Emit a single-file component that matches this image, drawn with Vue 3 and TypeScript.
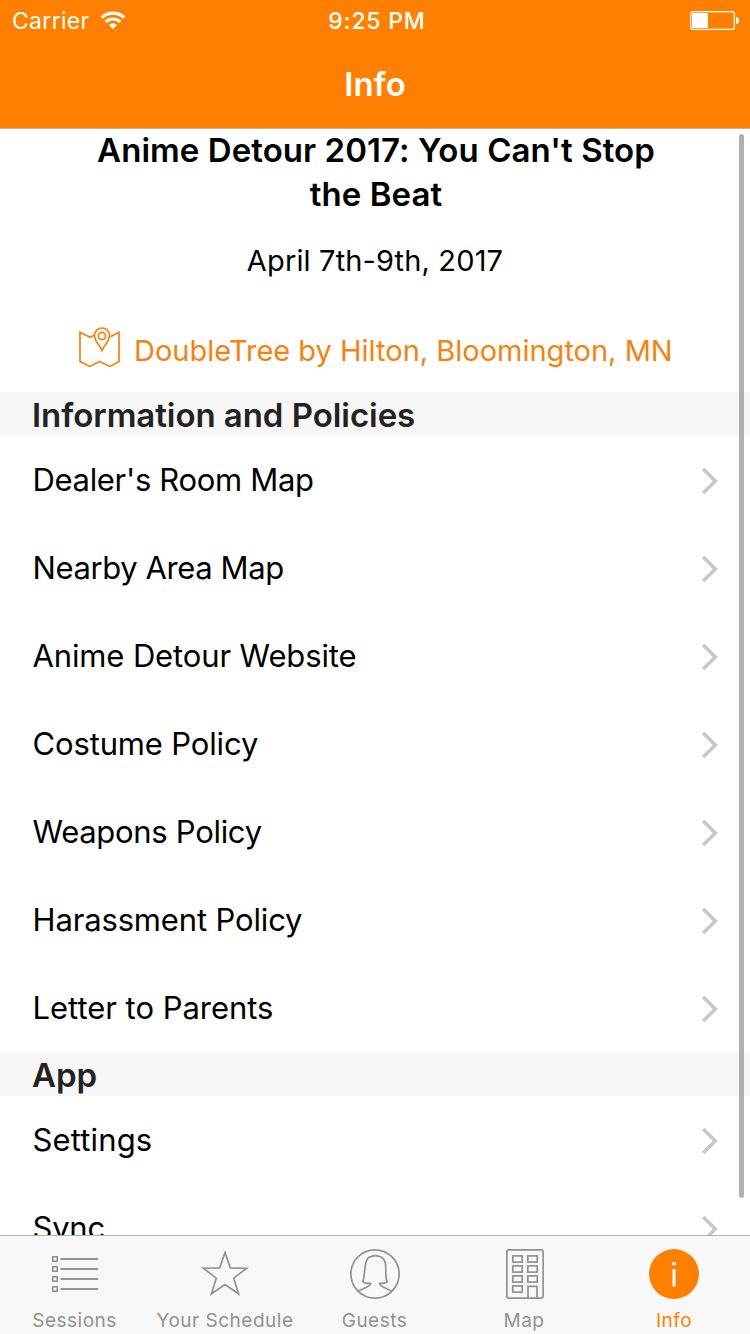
<script setup lang="ts">
interface Row {
  label: string
  spacing: string
}
interface Section {
  title: string
  rows: Row[]
}

const sections: Section[] = [
  {
    title: 'Information and Policies',
    rows: [
      { label: "Dealer's Room Map", spacing: '-0.33px' },
      { label: 'Nearby Area Map', spacing: '-0.4px' },
      { label: 'Anime Detour Website', spacing: '-0.13px' },
      { label: 'Costume Policy', spacing: '-0.15px' },
      { label: 'Weapons Policy', spacing: '-0.3px' },
      { label: 'Harassment Policy', spacing: '-0.15px' },
      { label: 'Letter to Parents', spacing: '-0.03px' },
    ],
  },
  {
    title: 'App',
    rows: [
      { label: 'Settings', spacing: '0.15px' },
      { label: 'Sync', spacing: '-0.25px' },
    ],
  },
]
const windows = [
  [512.5, 1255.5], [527.5, 1255.5],
  [512.5, 1265.5], [527.5, 1265.5],
  [512.5, 1275.5], [527.5, 1275.5],
  [512.5, 1285.5],
].map(([x, y]) => ({ x: x - 499, y: y - 1249 }))
</script>

<template>
  <div class="screen">
    <header class="top">
      <div class="status">
        <div class="carrier">
          <span>Carrier</span>
          <svg width="26" height="20" viewBox="0 0 26 20">
            <g fill="none" stroke="#fff">
              <path d="M1.8 6.6C8 .7 18 .7 24.2 6.6" stroke-width="3.3" />
              <path d="M5.6 10.9C9.7 7 16.3 7 20.4 10.9" stroke-width="3" />
            </g>
            <path d="M9 14Q13 10.3 17 14L13 18Z" fill="#fff" />
          </svg>
        </div>
        <div class="time">9:25 PM</div>
        <svg class="battery" width="50" height="20" viewBox="0 0 50 20">
          <rect x=".6" y=".6" width="43.8" height="17.8" rx="2.6" fill="none" stroke="#fff" stroke-width="1.2" />
          <rect x="2" y="2" width="16" height="15" rx="1" fill="#fff" />
          <path d="M46 6Q49 6 49 9.5Q49 13 46 13Z" fill="#fff" />
        </svg>
      </div>
      <h1>Info</h1>
    </header>

    <main>
      <h2>Anime Detour 2017: You Can't Stop<br />the Beat</h2>
      <p class="date">April 7th-9th, 2017</p>
      <div class="place">
        <svg width="42" height="42" viewBox="0 0 42 42" fill="none" stroke="currentColor" stroke-width="1.7">
          <path d="M16 7.8L11 10.2L1 5.2V34.6L11 39.4L20.5 34.4L31 39.4L40 34.6V5.2L31.5 9.8" />
          <path d="M23 23.5C21 18.5 15.5 14.5 15.5 8.5A7.5 7.5 0 0 1 30.5 8.5C30.5 14.5 25 18.5 23 23.5Z" />
          <circle cx="23" cy="9" r="3.6" />
        </svg>
        <span>DoubleTree by Hilton, Bloomington, MN</span>
      </div>
      <section v-for="section in sections" :key="section.title">
        <h3>{{ section.title }}</h3>
        <div v-for="row in section.rows" :key="row.label" class="row">
          <span :style="{ letterSpacing: row.spacing }">{{ row.label }}</span>
          <svg width="18" height="28" viewBox="0 0 18 28">
            <path d="M2.2 2L14.3 14L2.2 26" fill="none" stroke="#c7c7cc" stroke-width="3.6" />
          </svg>
        </div>
      </section>
      <i class="scrollbar" />
    </main>

    <nav>
      <div class="tab sessions">
        <svg width="50" height="50" viewBox="0 0 50 50" fill="none" stroke="#929292" stroke-width="1.6">
          <template v-for="n in 4" :key="n">
            <rect x="2.8" :y="-2.2 + n * 10" width="4.4" height="4.4" />
            <path :d="`M10.5 ${n * 10}H48`" stroke-width="1.8" />
          </template>
        </svg>
        <span>Sessions</span>
      </div>
      <div class="tab schedule">
        <svg width="50" height="50" viewBox="0 0 50 50" fill="none" stroke="#929292" stroke-width="1.7">
          <path d="M25 3.5L30.3 18.8L46.7 19.2L33.7 29.2L38.6 44.8L25 35.5L11.4 44.8L16.3 29.2L3.3 19.2L19.7 18.8Z" />
        </svg>
        <span>Your Schedule</span>
      </div>
      <div class="tab guests">
        <svg width="50" height="50" viewBox="0 0 50 50" fill="none" stroke="#929292" stroke-width="1.7">
          <circle cx="25" cy="25" r="24.1" />
          <path d="M8.5 42.2C11.5 39.5 20.5 38 20.5 34.4C18 34.4 14.5 34.6 12.8 32.4C15.5 28 13.2 8 21 7.6C25 5.8 33.5 6.6 35.2 13.5C36.8 20 34.5 28.5 37.2 32.4C35.5 34.6 32 34.4 29.7 34.4C29.7 38 38.5 39.5 41.5 42.2" />
        </svg>
        <span>Guests</span>
      </div>
      <div class="tab map">
        <svg width="50" height="50" viewBox="0 0 50 50" fill="none" stroke="#929292" stroke-width="1.7">
          <rect x="6.9" y=".9" width="36.2" height="48.2" rx="1.5" />
          <rect v-for="(w, i) in windows" :key="i" :x="w.x - .7" :y="w.y + .4" width="9.4" height="6.2" />
          <path d="M28 49V37.3H37V49" />
        </svg>
        <span>Map</span>
      </div>
      <div class="tab info">
        <svg width="50" height="50" viewBox="0 0 50 50">
          <circle cx="25" cy="25" r="25" fill="#ff8000" />
          <path d="M23.2 13.2H26.8V16.2H23.2ZM23.5 20H26.5V37.5H23.5Z" fill="#fff" />
        </svg>
        <span>Info</span>
      </div>
    </nav>
  </div>
</template>

<style>
body {
  margin: 0;
  overflow: hidden;
}
</style>

<style scoped>
.screen {
  width: 750px;
  height: 1334px;
  display: flex;
  flex-direction: column;
  overflow: hidden;
  background: #fff;
  color: #000;
  font-family: Inter, 'Liberation Sans', sans-serif;
}
.top {
  flex: none;
  height: 128px;
  background: #ff8000;
  border-bottom: 1px solid #b2b2b2;
  color: #fff;
}
.status {
  height: 40px;
  padding-top: 1px;
  margin-bottom: -1px;
  display: grid;
  grid-template-columns: 1fr auto 1fr;
  align-items: center;
  font-size: 23px;
}
.carrier {
  display: flex;
  align-items: center;
  gap: 10px;
  padding-left: 12px;
  letter-spacing: 0.3px;
}
.time {
  padding-left: 4px;
  font-weight: 500;
  letter-spacing: 0.8px;
}
.battery {
  justify-self: end;
  margin-right: 10px;
}
h1 {
  margin: 0;
  font-size: 33px;
  font-weight: 600;
  line-height: 88px;
  text-align: center;
}
main {
  position: relative;
  flex: 1;
  min-height: 0;
  overflow: hidden;
}
h2 {
  margin: -1px 0 0;
  padding-left: 2px;
  height: 88px;
  font-size: 33px;
  font-weight: 600;
  line-height: 44px;
  letter-spacing: 0.06px;
  text-align: center;
}
.date {
  margin: 25px 0 0;
  font-size: 29px;
  line-height: 40px;
  letter-spacing: 0.15px;
  text-align: center;
}
.place {
  height: 40px;
  margin: 49px 0 22px;
  padding-left: 79px;
  display: flex;
  align-items: center;
  gap: 13px;
  color: #f5820f;
  font-size: 29px;
  white-space: nowrap;
}
.place svg {
  margin-top: -4px;
}
h3 {
  box-sizing: border-box;
  height: 44px;
  margin: 0;
  padding: 1px 0 0 32px;
  background: #f7f7f7;
  color: #222;
  font-size: 33px;
  font-weight: 600;
  line-height: 44px;
  letter-spacing: -0.05px;
}
.row {
  height: 88px;
  padding: 0 31px 0 32.5px;
  display: flex;
  align-items: center;
  justify-content: space-between;
  font-size: 31px;
}
.row span {
  margin-top: -2px;
}
.row svg {
  margin-top: 2px;
}
.scrollbar {
  position: absolute;
  top: 5px;
  right: 6px;
  width: 5px;
  height: 1064px;
  border-radius: 3px;
  background: #b0b0b0;
}
nav {
  flex: none;
  height: 98px;
  display: grid;
  grid-template-columns: repeat(5, 150px);
  background: #f8f8f8;
  border-top: 1px solid #b2b2b2;
}
.tab {
  display: flex;
  flex-direction: column;
  align-items: center;
  padding-top: 13px;
  color: #929292;
  font-size: 19px;
  line-height: 24px;
  white-space: nowrap;
}
.tab span {
  margin-top: 10px;
  letter-spacing: 0.5px;
}
.sessions span,
.guests span,
.map span {
  margin-right: 1px;
}
.tab.map {
  padding-right: 1px;
}
.tab.info {
  padding-right: 2px;
  color: #ff8000;
}
</style>
